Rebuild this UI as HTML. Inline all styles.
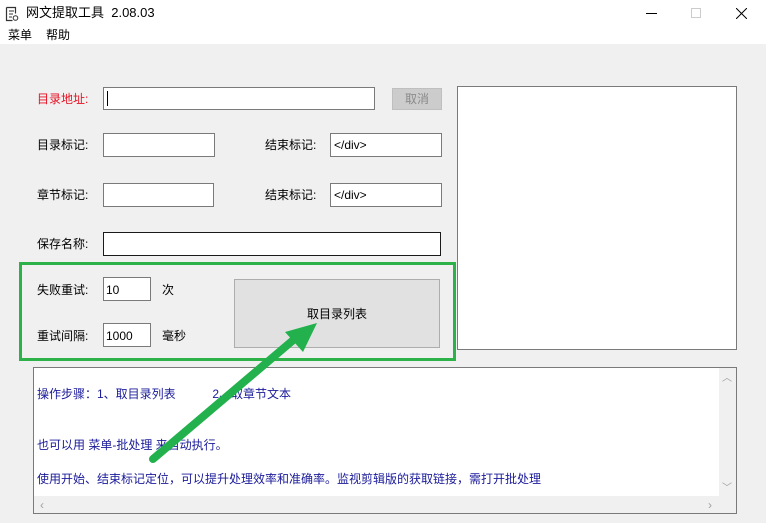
<!DOCTYPE html>
<html><head><meta charset="utf-8"><style>
*{margin:0;padding:0;box-sizing:border-box}
body{width:766px;height:523px;background:#f0f0f0;font-family:"Liberation Sans","Microsoft YaHei","Noto Sans CJK SC",sans-serif;font-size:12px;color:#000;position:relative;overflow:hidden}
.a{position:absolute}
.box{position:absolute;background:#fff;border:1px solid #7a7a7a}
.t{position:absolute;line-height:14px;white-space:nowrap}
</style></head><body>
<div class="a" style="left:0;top:0;width:766px;height:44px;background:#fff"></div>
<svg class="a" style="left:5px;top:6px" width="14" height="16" viewBox="0 0 14 16"><path d="M1.5 1.5h9v6M1.5 1.5v13h6" fill="none" stroke="#333" stroke-width="1.2"/><path d="M4 5h5M4 8h4M4 11h3" stroke="#333"/><circle cx="10.5" cy="12" r="2.3" fill="none" stroke="#333"/></svg>
<div class="t" style="left:26px;top:6px;font-size:13px">网文提取工具&nbsp;&nbsp;2.08.03</div>
<div class="a" style="left:646px;top:13px;width:11px;height:1px;background:#000"></div>
<div class="a" style="left:691px;top:8px;width:10px;height:10px;border:1px solid #ccc"></div>
<svg class="a" style="left:736px;top:8px" width="11" height="11"><path d="M0 0L11 11M11 0L0 11" stroke="#000"/></svg>
<div class="t" style="left:8px;top:28px;font-size:12px">菜单</div>
<div class="t" style="left:46px;top:28px">帮助</div>

<div class="t" style="left:37px;top:92px;color:#e81123">目录地址:</div>
<div class="box" style="left:103px;top:87px;width:272px;height:23px"></div>
<div class="a" style="left:107px;top:91px;width:1px;height:15px;background:#000"></div>
<div class="a" style="left:392px;top:88px;width:50px;height:22px;background:#cccccc;border:1px solid #bfbfbf"></div>
<div class="t" style="left:405px;top:92px;color:#8a8a8a">取消</div>

<div class="t" style="left:37px;top:138px">目录标记:</div>
<div class="box" style="left:103px;top:133px;width:112px;height:24px"></div>
<div class="t" style="left:265px;top:138px">结束标记:</div>
<div class="box" style="left:330px;top:133px;width:112px;height:24px"></div>
<div class="t" style="left:334px;top:138px">&lt;/div&gt;</div>

<div class="t" style="left:37px;top:188px">章节标记:</div>
<div class="box" style="left:103px;top:183px;width:111px;height:24px"></div>
<div class="t" style="left:265px;top:188px">结束标记:</div>
<div class="box" style="left:330px;top:183px;width:112px;height:24px"></div>
<div class="t" style="left:334px;top:188px">&lt;/div&gt;</div>

<div class="t" style="left:37px;top:237px">保存名称:</div>
<div class="box" style="left:103px;top:232px;width:338px;height:24px;border-color:#1a1a1a"></div>

<div class="box" style="left:457px;top:86px;width:280px;height:264px"></div>

<div class="a" style="left:19px;top:262px;width:437px;height:99px;border:3px solid #2db24a"></div>
<div class="t" style="left:37px;top:283px">失败重试:</div>
<div class="box" style="left:103px;top:277px;width:48px;height:24px"></div>
<div class="t" style="left:106px;top:283px">10</div>
<div class="t" style="left:162px;top:283px">次</div>
<div class="t" style="left:37px;top:329px">重试间隔:</div>
<div class="box" style="left:103px;top:323px;width:48px;height:24px"></div>
<div class="t" style="left:106px;top:329px">1000</div>
<div class="t" style="left:162px;top:329px">毫秒</div>
<div class="a" style="left:234px;top:279px;width:206px;height:69px;background:#e1e1e1;border:1px solid #adadad"></div>
<div class="t" style="left:307px;top:307px">取目录列表</div>

<div class="box" style="left:33px;top:367px;width:704px;height:147px"></div>
<div class="a" style="left:719px;top:368px;width:17px;height:128px;background:#f0f0f0"></div>
<div class="a" style="left:34px;top:496px;width:702px;height:17px;background:#f0f0f0"></div>
<div class="t" style="left:722px;top:372px;color:#a0a0a0;font-size:10px">︿</div>
<div class="t" style="left:722px;top:482px;color:#a0a0a0;font-size:10px">﹀</div>
<div class="t" style="left:40px;top:498px;color:#a0a0a0">‹</div>
<div class="t" style="left:708px;top:498px;color:#a0a0a0">›</div>
<div class="t" style="left:37px;top:387px;color:#1a1a9a">操作步骤：1、取目录列表&nbsp;&nbsp;&nbsp;&nbsp;&nbsp;&nbsp;&nbsp;&nbsp;&nbsp;&nbsp;&nbsp;2、取章节文本</div>
<div class="t" style="left:37px;top:438px;color:#1a1a9a">也可以用 菜单-批处理 来自动执行。</div>
<div class="t" style="left:37px;top:472px;color:#1a1a9a">使用开始、结束标记定位，可以提升处理效率和准确率。监视剪辑版的获取链接，需打开批处理</div>

<svg class="a" style="left:0;top:0" width="766" height="523"><path d="M153 459L298 336" stroke="#22b14c" stroke-width="8" stroke-linecap="round"/><path d="M317 323L285 332L303 352Z" fill="#22b14c"/></svg>
</body></html>
